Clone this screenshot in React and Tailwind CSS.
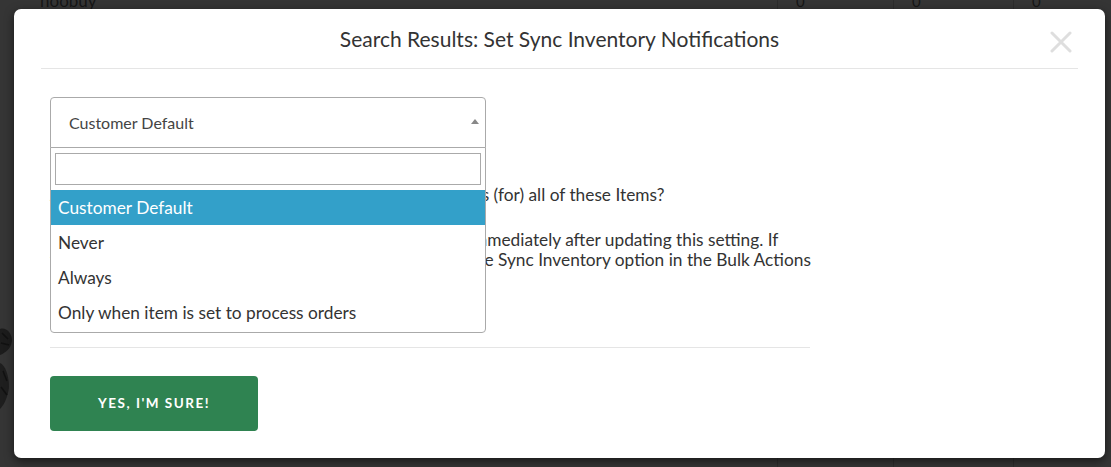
export default function App() {
  const font = { fontFamily: 'Lato, "Open Sans", sans-serif' };
  return (
    <div className="relative w-[1111px] h-[467px] overflow-hidden bg-[#353535]" style={font}>
      {/* dimmed page behind the overlay */}
      <div className="absolute inset-0 flex text-[#161616]">
        <div className="w-[777px] flex flex-col justify-between">
          <div className="pl-[40px] mt-[-12px] text-[17px]">noobuy</div>
          <svg className="mb-[52px]" width="14" height="90" viewBox="0 0 14 90">
            <path d="M0 4 C6 2 12 8 12 16 C11 24 5 28 0 30 Z" fill="#1c1c1c" />
            <path d="M0 38 C5 40 9 50 9 62 C8 72 4 80 0 84 Z" fill="#1e1e1e" />
            <path d="M2 8 L8 14 M1 18 L9 20 M3 46 L7 56 M1 62 L7 70" stroke="#111" strokeWidth="1.5" />
          </svg>
        </div>
        <div className="w-[116px] border-l border-[#2c2c2c] pl-[18px] mt-[-10px] text-[15px]">0</div>
        <div className="w-[120px] border-l border-[#2c2c2c] pl-[18px] mt-[-10px] text-[15px]">0</div>
        <div className="flex-1 border-l border-[#2c2c2c] pl-[18px] mt-[-10px] text-[15px]">0</div>
      </div>

      {/* modal */}
      <div className="absolute left-[14px] top-[9px] w-[1091px] h-[449px] bg-white rounded-[7px] shadow-[0_3px_10px_rgba(0,0,0,0.55)]">
        <div className="relative mx-[27px] h-[60px] border-b border-[#e5e5e5] flex items-center justify-center">
          <h4 className="text-[21px] leading-[24px] text-[#333]">
            Search Results: Set Sync Inventory Notifications
          </h4>
          <svg className="absolute right-[6px] top-[22px]" width="22" height="22" viewBox="0 0 22 22">
            <path d="M2 2 L20 20 M20 2 L2 20" stroke="#dedede" strokeWidth="3" strokeLinecap="round" />
          </svg>
        </div>

        <div className="px-[36px] pt-[28px]">
          <div className="relative w-[436px]">
            <div className="h-[51px] border border-[#aaa] rounded-t-[4px] flex items-center justify-between pl-[18px] pr-[6px]">
              <span className="text-[16px] text-[#444]">Customer Default</span>
              <svg width="8" height="5" viewBox="0 0 8 5" className="mb-[2px]">
                <path d="M0 5 L4 0 L8 5 Z" fill="#888" />
              </svg>
            </div>
            <div className="absolute left-0 top-[50px] z-10 w-[436px] bg-white border border-[#aaa] rounded-b-[4px] pb-[2px]">
              <div className="px-[4px] pt-[5px] pb-[5px]">
                <div className="h-[32px] border border-[#aaa]" />
              </div>
              <ul className="text-[17.3px] text-[#333]">
                <li className="h-[35px] flex items-center px-[7px] bg-[#33a0c9] text-white">Customer Default</li>
                <li className="h-[35px] flex items-center px-[7px]">Never</li>
                <li className="h-[35px] flex items-center px-[7px]">Always</li>
                <li className="h-[35px] flex items-center px-[7px]">Only when item is set to process orders</li>
              </ul>
            </div>
          </div>

          <div className="w-[760px] text-[17.3px] leading-[20px] text-[#333]">
            <p className="mt-[37px] whitespace-nowrap">
              Are you sure you want to set <b>Sync Inventory Notification</b>s (for) all of these Items?
            </p>
            <p className="mt-[25px] whitespace-nowrap">
              Inventory for these selected items will be synchronized immediately after updating this setting. If
              <br />
              you would prefer to sync it later, you can manually pick the Sync Inventory option in the Bulk Actions
              <br />
              menu.
            </p>
          </div>

          <div className="w-[760px] mt-[57px] border-t border-[#e5e5e5]" />

          <button className="mt-[28px] w-[208px] h-[55px] rounded-[4px] bg-[#2f8351] text-white text-[13.5px] font-bold tracking-[1.5px] uppercase">
            Yes, I'm sure!
          </button>
        </div>
      </div>
    </div>
  );
}
